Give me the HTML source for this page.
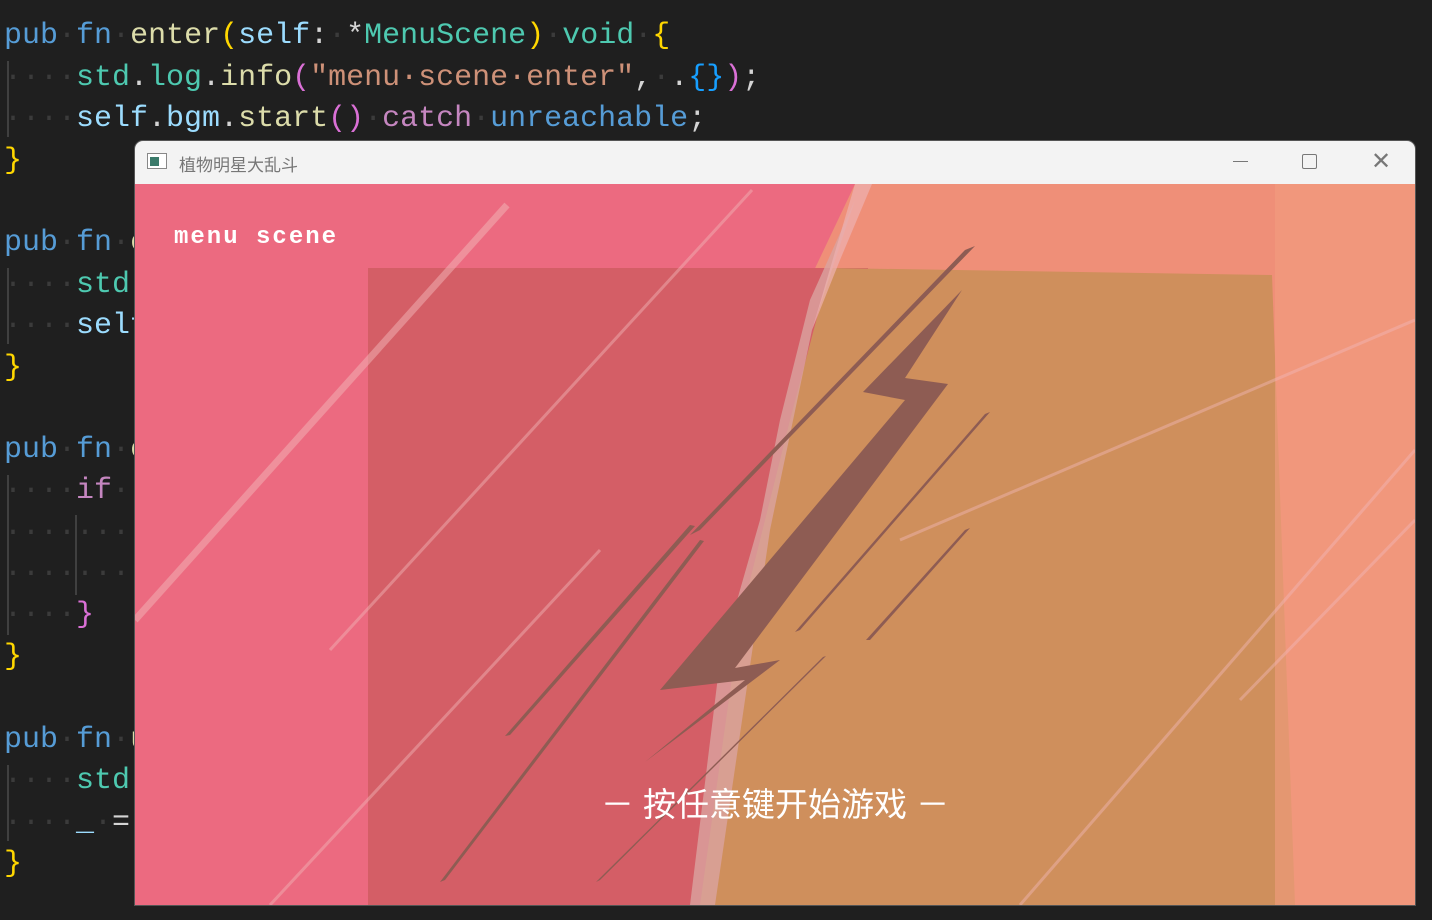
<!DOCTYPE html>
<html><head><meta charset="utf-8"><style>
body{margin:0;width:1432px;height:920px;background:#1f1f1f;overflow:hidden;position:relative;font-family:"Liberation Mono",monospace}
.c{position:absolute;left:4px;font-size:30px;white-space:pre;line-height:41px;color:#d4d4d4}
.k{color:#569cd6}.f{color:#dcdcaa}.t{color:#4ec9b0}.v{color:#9cdcfe}.s{color:#ce9178}.y{color:#ffd700}.p{color:#da70d6}.b{color:#179fff}.m{color:#c586c0}.d{color:#3b3b3b}
.g{position:absolute;left:7px;width:2px;background:#404040}
.win{position:absolute;left:135px;top:141px;width:1280px;height:764px;background:#f3f3f3;border-radius:8px 8px 0 0;overflow:hidden;box-shadow:0 0 0 1px #555}
.tb{height:43px;position:relative;font-family:"Liberation Sans","Noto Sans CJK SC",sans-serif;font-size:17px;color:#777}
</style></head><body>
<div class="g" style="top:61px;height:76px"></div>
<div class="g" style="top:268px;height:76px"></div>
<div class="g" style="top:475px;height:160px"></div>
<div class="g" style="top:765px;height:76px"></div>
<div class="c" style="top:16px"><span class="k">pub</span><span class="d">·</span><span class="k">fn</span><span class="d">·</span><span class="f">enter</span><span class="y">(</span><span class="v">self</span>:<span class="d">·</span>*<span class="t">MenuScene</span><span class="y">)</span><span class="d">·</span><span class="t">void</span><span class="d">·</span><span class="y">{</span></div>
<div class="c" style="top:58px"><span class="d">····</span><span class="t">std</span>.<span class="t">log</span>.<span class="f">info</span><span class="p">(</span><span class="s">"menu·scene·enter"</span>,<span class="d">·</span>.<span class="b">{}</span><span class="p">)</span>;</div>
<div class="c" style="top:99px"><span class="d">····</span><span class="v">self</span>.<span class="v">bgm</span>.<span class="f">start</span><span class="p">()</span><span class="d">·</span><span class="m">catch</span><span class="d">·</span><span class="k">unreachable</span>;</div>
<div class="c y" style="top:141px">}</div>
<div class="c" style="top:223px"><span class="k">pub</span><span class="d">·</span><span class="k">fn</span><span class="d">·</span><span class="f">e</span></div>
<div class="c" style="top:265px"><span class="d">····</span><span class="t">std</span></div>
<div class="c" style="top:306px"><span class="d">····</span><span class="v">self</span></div>
<div class="c y" style="top:348px">}</div>
<div class="c" style="top:430px"><span class="k">pub</span><span class="d">·</span><span class="k">fn</span><span class="d">·</span><span class="f">e</span></div>
<div class="c" style="top:471px"><span class="d">····</span><span class="m">if</span><span class="d">·</span></div>
<div class="c" style="top:513px"><span class="d">·······</span></div>
<div class="c" style="top:554px"><span class="d">·······</span></div>
<div class="g" style="left:75px;top:515px;height:80px"></div>
<div class="c" style="top:595px"><span class="d">····</span><span class="p">}</span></div>
<div class="c y" style="top:637px">}</div>
<div class="c" style="top:720px"><span class="k">pub</span><span class="d">·</span><span class="k">fn</span><span class="d">·</span><span class="f">u</span></div>
<div class="c" style="top:761px"><span class="d">····</span><span class="t">std</span></div>
<div class="c" style="top:803px"><span class="d">····</span><span class="v">_</span><span class="d">·</span>=</div>
<div class="c y" style="top:844px">}</div>

<div class="win">
<div class="tb">
<div style="position:absolute;left:12px;top:12px;width:20px;height:16px;border:1px solid #888;box-sizing:border-box;background:#fff"><div style="position:absolute;left:2px;top:3px;width:9px;height:9px;background:#3a7a6a"></div></div>
<div style="position:absolute;left:44px;top:10px">植物明星大乱斗</div>
<div style="position:absolute;left:1098px;top:20px;width:15px;height:1px;background:#777"></div>
<div style="position:absolute;left:1167px;top:13px;width:13px;height:13px;border:1px solid #777;border-radius:2px"></div>
<div style="position:absolute;left:1236px;top:9px;font-size:24px;line-height:24px;color:#777">✕</div>
</div>
<svg width="1280" height="721" viewBox="135 184 1280 721" style="display:block">
<rect x="135" y="184" width="1280" height="721" fill="#ec6a80"/>
<polygon points="855,184 1415,184 1415,905 690,905 760,600 800,300" fill="#ef8f78"/>
<rect x="368" y="268" width="500" height="637" fill="#d45e66"/>
<polygon points="830,268 1272,275 1295,905 700,905 740,620 790,420" fill="#cf8f5c"/>
<polygon points="855,200 810,300 780,420 760,520 720,660 690,905 715,905 745,700 770,530 812,330" fill="#d9a2a0" opacity=".8"/>
<polygon points="855,184 872,184 840,260 812,330" fill="#eeb0b0" opacity=".7"/>
<rect x="1275" y="184" width="140" height="721" fill="#f19c7e" opacity=".6"/>
<g stroke="#f2b7b8" stroke-width="7" opacity=".5"><line x1="135" y1="620" x2="507" y2="205"/></g>
<g stroke="#f2b7b8" stroke-width="3" opacity=".45"><line x1="330" y1="650" x2="752" y2="190"/><line x1="270" y1="905" x2="600" y2="550"/><line x1="900" y1="540" x2="1415" y2="320"/><line x1="1020" y1="905" x2="1415" y2="450"/><line x1="1240" y1="700" x2="1415" y2="520"/></g>
<g fill="#8e5c53">
<polygon points="962,290 863,392 905,400 660,690 745,680 645,762 780,660 735,668 948,384 905,378"/>
<polygon points="965,250 975,246 700,530 690,535"/>
<polygon points="985,414 990,412 800,630 795,632"/>
<polygon points="965,530 970,528 870,640 866,640"/>
<polygon points="690,525 695,526 510,735 505,736"/>
<polygon points="823,657 826,656 600,880 596,882"/>
<polygon points="700,540 704,541 445,880 440,882"/>
</g>
<text x="174" y="243" fill="#fff" font-family="Liberation Mono,monospace" font-weight="bold" font-size="24" letter-spacing="2">menu scene</text>
<text x="775" y="816" fill="#fff" text-anchor="middle" font-family="Liberation Sans,Noto Sans CJK SC,sans-serif" font-size="33">－ 按任意键开始游戏 －</text>
</svg>
</div>
</body></html>
